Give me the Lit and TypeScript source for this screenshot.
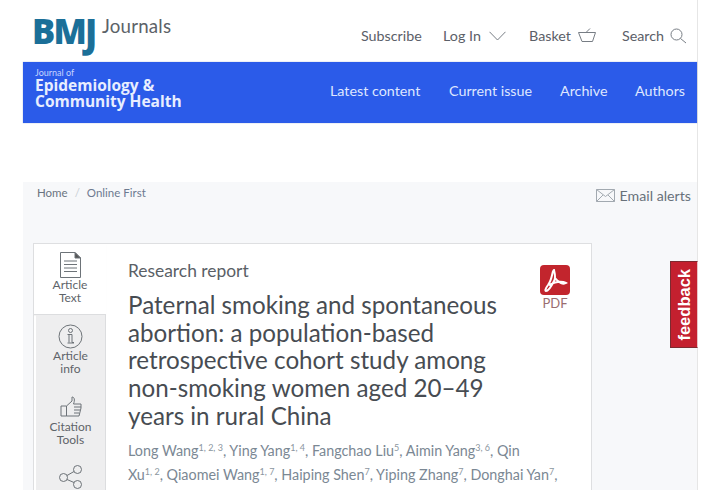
import { LitElement, html, css } from "lit";
import { customElement } from "lit/decorators.js";

@customElement("app-root")
export class AppRoot extends LitElement {
  static styles = css`
    :host { display: block; width: 710px; height: 490px; overflow: hidden; background: #fff; font-family: Lato, "Open Sans", sans-serif; color: #555b63; position: relative; }
    .page { width: 697px; height: 490px; display: flex; flex-direction: column; border-right: 1px solid #e6e6e6; box-sizing: content-box; }
    .top { height: 62px; flex: none; display: flex; align-items: flex-start; padding-left: 34px; box-sizing: border-box; }
    .logo { display: flex; align-items: flex-start; width: 327px; flex: none; }
    .bmj { font: 800 34.5px/36px "Open Sans", sans-serif; color: #1b6f98; letter-spacing: -1.8px; margin-top: 13px; margin-left: -2px; width: 70px; white-space: nowrap; }
    .bmj span { display: inline-block; transform: scaleY(1.12); transform-origin: 50% 25%; }
    .journals { font-size: 18.7px; line-height: 22px; color: #5c6268; margin-top: 15px; letter-spacing: .2px; }
    .tools { display: flex; align-items: center; height: 20px; margin-top: 25px; font-size: 14.3px; color: #5b6068; }
    .tools span { white-space: nowrap; }
    .tools svg { display: block; fill: none; stroke: #777d84; stroke-width: 1; }
    .t1 { width: 82px; }
    .t2 { width: 86px; display: flex; align-items: center; gap: 8px; padding-top: 1px; }
    .t3 { width: 93px; display: flex; align-items: center; gap: 7px; }
    .t4 { display: flex; align-items: center; gap: 6px; padding-top: 1px; }
    .band { margin-left: 23px; height: 61px; flex: none; background: #2b5be9; color: #fff; display: flex; align-items: flex-start; box-sizing: border-box; padding-left: 12px; box-shadow: 0 0 1px rgba(40,70,160,.5); }
    .brand { width: 295px; flex: none; font-weight: 700; }
    .brand small { display: block; font-weight: 400; font-size: 9px; line-height: 9px; margin-top: 6px; color: #c6d4ff; }
    .brand b { display: block; font-family: "Open Sans", sans-serif; font-size: 15.5px; line-height: 16px; font-weight: 700; color: #e8eeff; }
    .nav { display: flex; font-size: 14.3px; line-height: 18px; padding-top: 20px; color: #dfe7ff; }
    .nav span { white-space: nowrap; }
    .n1 { width: 119px; } .n2 { width: 111px; } .n3 { width: 75px; }
    .gap { height: 59px; flex: none; }
    .main { flex: 1; background: #f7f8fa; display: flex; flex-direction: column; margin-left: 23px; padding-left: 14px; min-height: 0; }
    .crumbs { height: 61px; flex: none; display: flex; align-items: flex-start; font-size: 11.5px; color: #6a7480; padding-top: 4px; box-sizing: border-box; }
    .crumbs i { font-style: normal; color: #c9ced4; margin: 0 7px; }
    .crumbs .on { color: #6d7a90; }
    .alerts { margin-left: auto; margin-right: 6px; display: flex; align-items: center; gap: 5px; font-size: 14.2px; color: #68717a; margin-top: 1px; }
    .alerts svg { display: block; fill: none; stroke: #a2a9b0; stroke-width: 1; }
    .card { width: 559px; margin-left: -4px; flex: 1; min-height: 0; background: #fff; border: 1px solid #dedfe1; border-bottom: 0; box-sizing: border-box; display: flex; }
    .rail { width: 72px; flex: none; display: flex; flex-direction: column; }
    .tab { display: flex; flex-direction: column; align-items: center; text-align: center; font-size: 12px; line-height: 13px; color: #5e6469; background: #eeeeef; margin-left: 2px; border-right: 1px solid #dcdddf; flex: none; box-sizing: border-box; }
    .tab svg { display: block; fill: none; stroke: #6d7378; stroke-width: 1; }
    .tab.active { background: #fff; margin-left: 0; height: 71px; border-right: 0; border-bottom: 1px solid #dcdddf; box-shadow: 0 1px 1px rgba(0,0,0,.04); padding-top: 8px; }
    .tab.info { height: 71px; padding-top: 9px; }
    .tab.cite { height: 71px; padding-top: 10px; }
    .tab.cite svg { margin-bottom: 3px; }
    .tab.share { flex: 1; padding-top: 8px; }
    .body { flex: 1; min-width: 0; padding: 17px 0 0 22px; position: relative; }
    .kind { font-size: 17.4px; line-height: 20px; color: #5a6066; }
    h1 { margin: 10px 0 0; font-size: 24.2px; line-height: 27.7px; font-weight: 400; color: #474c52; width: 385px; }
    .authors { margin-top: 9px; width: 410px; font-size: 14.35px; line-height: 24px; color: #7b8894; white-space: nowrap; }
    .authors sup { font-size: 9px; line-height: 0; vertical-align: 5px; color: #8b96a0; }
    .pdf { position: absolute; left: 434px; top: 21px; width: 30px; display: flex; flex-direction: column; align-items: center; font-size: 13px; line-height: 14px; color: #9a6d70; }
    .pdf svg { display: block; margin-bottom: 1px; }
    .feedback { position: absolute; left: 670px; top: 261px; width: 28px; height: 87px; box-sizing: border-box; background: #c4202f; border: 1px solid #7d2a30; border-right: 1px solid #e9c5c8; color: #fff; font: 700 16.5px/26px "Liberation Sans", Arial, sans-serif; display: flex; align-items: center; justify-content: center; }
    .feedback span { writing-mode: vertical-rl; transform: rotate(180deg); }
  `;

  render() {
    return html`
      <div class="page">
        <div class="top">
          <div class="logo"><div class="bmj">BM<span>J</span></div><div class="journals">Journals</div></div>
          <div class="tools">
            <span class="t1">Subscribe</span>
            <span class="t2">Log In
              <svg width="17" height="10" viewBox="0 0 17 10"><path d="M.5.8 8.5 9 16.5.8"/></svg></span>
            <span class="t3">Basket
              <svg width="18" height="15" viewBox="0 0 18 15"><path d="M.5 4.5H17.5L14.5 13.5H4L.5 4.5ZM8 4.5 12 .5"/></svg></span>
            <span class="t4">Search
              <svg width="17" height="16" viewBox="0 0 17 16"><circle cx="6.5" cy="6.5" r="5.5"/><path d="M10.5 10.5 16 15"/></svg></span>
          </div>
        </div>
        <div class="band">
          <div class="brand"><small>Journal of</small><b>Epidemiology &amp;</b><b>Community Health</b></div>
          <div class="nav"><span class="n1">Latest content</span><span class="n2">Current issue</span><span class="n3">Archive</span><span>Authors</span></div>
        </div>
        <div class="gap"></div>
        <div class="main">
          <div class="crumbs">
            <span>Home</span><i>/</i><span class="on">Online First</span>
            <div class="alerts">
              <svg width="19" height="13" viewBox="0 0 19 13"><path d="M.5.5H18.5V12.5H.5ZM.5.5 9.5 7.5 18.5.5M.5 12.5 7 6M18.5 12.5 12 6"/></svg>
              <span>Email alerts</span>
            </div>
          </div>
          <div class="card">
            <div class="rail">
              <div class="tab active">
                <svg width="21" height="26" viewBox="0 0 21 26"><path d="M.5.5H15L20.5 6V25.5H.5ZM4 9H17M4 12.5H17M4 16H17M4 19.5H17"/><path d="M15 .5 20.5 6H15Z" fill="#555"/></svg>
                <span>Article<br />Text</span>
              </div>
              <div class="tab info">
                <svg width="25" height="25" viewBox="0 0 25 25"><circle cx="12.5" cy="12.5" r="11.5"/><circle cx="12.5" cy="6.5" r="2"/><path d="M9.5 10.5H14V18.5H16M9.5 19H16M11 11V18.5"/></svg>
                <span>Article<br />info</span>
              </div>
              <div class="tab cite">
                <svg width="22" height="21" viewBox="0 0 22 21"><path d="M1 10H6.5V20H1ZM6.5 10 12 5V1C14.5 1 15 4 13.5 8H21V12L19 20H6.5"/><path d="M14 11H21M14 14H20M14 17H19"/></svg>
                <span>Citation<br />Tools</span>
              </div>
              <div class="tab share">
                <svg width="24" height="24" viewBox="0 0 24 24"><circle cx="18.5" cy="4.5" r="4"/><circle cx="4.5" cy="12.5" r="4"/><circle cx="18.5" cy="19.5" r="4"/><path d="M8 10.5 15 6.5M8 14.5 15 17.5"/></svg>
              </div>
            </div>
            <div class="body">
              <div class="kind">Research report</div>
              <h1>Paternal smoking and spontaneous abortion: a population-based retrospective cohort study among non-smoking women aged 20–49 years in rural China</h1>
              <div class="authors">Long Wang<sup>1, 2, 3</sup>, Ying Yang<sup>1, 4</sup>, Fangchao Liu<sup>5</sup>, Aimin Yang<sup>3, 6</sup>, Qin<br />Xu<sup>1, 2</sup>, Qiaomei Wang<sup>1, 7</sup>, Haiping Shen<sup>7</sup>, Yiping Zhang<sup>7</sup>, Donghai Yan<sup>7</sup>,</div>
              <div class="pdf">
                <svg width="30" height="30" viewBox="0 0 30 30"><rect width="30" height="30" rx="4" fill="#c2252d"/><path d="M14 5C12 5 13 13 8 20 5 24 5 26 6 26 9 26 12 20 14 16 16 13 14 5 14 5ZM9 20C15 17 22 16 26 18 23 20 18 17 15 13" fill="none" stroke="#fff" stroke-width="2"/></svg>
                <span>PDF</span>
              </div>
            </div>
          </div>
        </div>
      </div>
      <div class="feedback"><span>feedback</span></div>
    `;
  }
}
